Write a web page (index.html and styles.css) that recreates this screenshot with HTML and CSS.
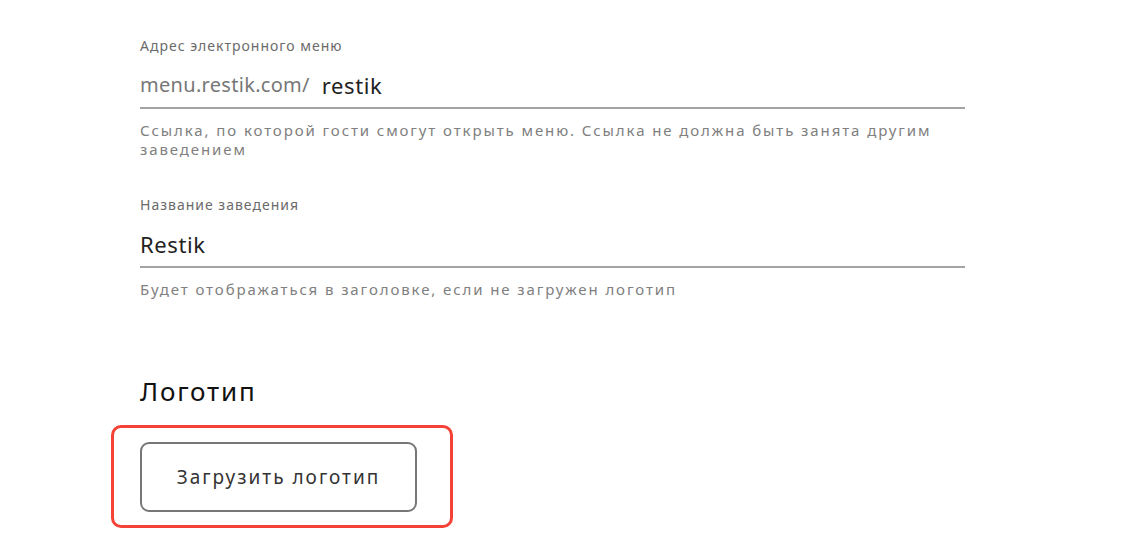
FILE: index.html
```html
<!DOCTYPE html>
<html lang="ru">
<head>
    <meta charset="UTF-8">
    <meta name="viewport" content="width=device-width, initial-scale=1.0">
    <title>Настройки заведения</title>
    <link rel="stylesheet" href="styles.css">
</head>
<body>
<div class="container">
    <div class="field">
        <label class="label" for="slug">Адрес электронного меню</label>
        <div class="input-row">
            <span class="prefix">menu.restik.com/</span>
            <input class="input" type="text" id="slug" value="restik">
        </div>
        <p class="hint">Ссылка, по которой гости смогут открыть меню. Ссылка не должна быть занята другим заведением</p>
    </div>

    <div class="field">
        <label class="label" for="name">Название заведения</label>
        <div class="input-row">
            <input class="input" type="text" id="name" value="Restik">
        </div>
        <p class="hint">Будет отображаться в заголовке, если не загружен логотип</p>
    </div>

    <h2 class="title">Логотип</h2>
    <div class="highlight">
        <button class="upload">Загрузить логотип</button>
    </div>
</div>
</body>
</html>
```

FILE: styles.css
```css
body {
    margin: 0;
    background: #ffffff;
    font-family: "Noto Sans", "Open Sans", sans-serif;
    color: #222222;
}
.container {
    width: 825px;
    padding: 36px 0 0 140px;
}
.field {
    margin-bottom: 36px;
}
.label {
    display: block;
    font-size: 14px;
    line-height: 20px;
    letter-spacing: 1px;
    color: #6b6b6b;
}
.input-row {
    display: flex;
    align-items: center;
    height: 45px;
    border-bottom: 2px solid #a3a3a3;
    margin-top: 6px;
}
.prefix {
    font-size: 20px;
    letter-spacing: 0.3px;
    color: #777777;
    margin-right: 12px;
}
.input {
    flex: 1;
    border: none;
    outline: none;
    padding: 0;
    font-family: inherit;
    font-size: 22px;
    letter-spacing: 0.6px;
    color: #222222;
    background: transparent;
}
.hint {
    margin: 12px 0 0;
    font-size: 15px;
    line-height: 19px;
    letter-spacing: 1.9px;
    color: #808080;
}
.title {
    margin: 74px 0 0;
    font-size: 26px;
    line-height: 36px;
    font-weight: 400;
    letter-spacing: 1.8px;
    color: #111111;
}
.highlight {
    display: inline-block;
    margin: 16px 0 0 -29px;
    padding: 14px 33px 13px 26px;
    border: 3px solid #f44336;
    border-radius: 10px;
}
.upload {
    display: block;
    width: 277px;
    height: 70px;
    border: 2px solid #777777;
    border-radius: 9px;
    background: #ffffff;
    font-family: inherit;
    font-size: 19px;
    letter-spacing: 2px;
    color: #333333;
}
```
